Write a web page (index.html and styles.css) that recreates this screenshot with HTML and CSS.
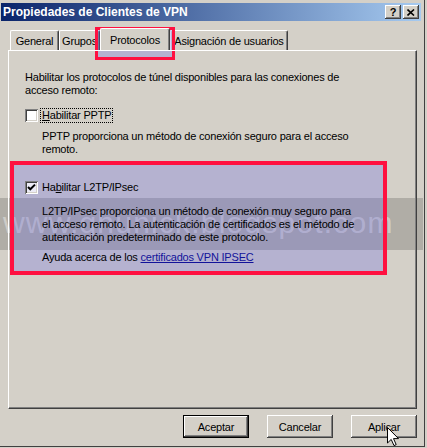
FILE: index.html
```html
<!doctype html>
<html lang="es">
<head>
    <meta charset="utf-8" />
    <title>Propiedades de Clientes de VPN</title>
    <link rel="stylesheet" href="styles.css">
</head>
<body>
    <div class="window">
        <div class="titlebar">
            <span class="title">Propiedades de Clientes de VPN</span>
            <div class="caption-btns">
                <span class="cbtn help">?</span>
                <span class="cbtn">
                    <svg width="8" height="7" viewBox="0 0 8 7"><path d="M0.5 0.5 L7 6.5 M7 0.5 L0.5 6.5" stroke="#000" stroke-width="1.6" fill="none"/></svg>
                </span>
            </div>
        </div>

        <div class="tabs">
            <div class="tab t-general">General</div>
            <div class="tab t-grupos">Grupos</div>
            <div class="tab t-proto active">Protocolos</div>
            <div class="tab t-asig">Asignación de usuarios</div>
        </div>

        <div class="watermark">www.ghunick.blogspot.com</div>

        <div class="panel">
            <p class="intro">Habilitar los protocolos de túnel disponibles para las conexiones de<br>acceso remoto:</p>

            <div class="check">
                <span class="box"></span>
                <span class="focus"><u>H</u>abilitar PPTP</span>
            </div>
            <p class="desc pptp">PPTP proporciona un método de conexión seguro para el acceso<br>remoto.</p>

            <div class="highlight">
                <div class="check">
                    <span class="box checked">
                        <svg width="9" height="9" viewBox="0 0 9 9"><path d="M1 4 L3.3 6.3 L8 1.6" stroke="#000" stroke-width="2" fill="none"/></svg>
                    </span>
                    <span>Ha<u>b</u>ilitar L2TP/IPsec</span>
                </div>
                <p class="desc l2tp">L2TP/IPsec proporciona un método de conexión muy seguro para<br>el acceso remoto. La autenticación de certificados es el método de<br>autenticación predeterminado de este protocolo.</p>
                <p class="desc help-line">Ayuda acerca de los <a href="#">certificados VPN IPSEC</a></p>
            </div>
        </div>

        <div class="buttons">
            <span class="btn default">Aceptar</span>
            <span class="btn">Cancelar</span>
            <span class="btn">Aplicar</span>
        </div>

        <div class="tab-mark"></div>
        <svg class="cursor" width="12" height="20" viewBox="0 0 12 20">
            <path d="M0.5 0.5 L0.5 16 L4.2 12.4 L7 18.6 L9.2 17.6 L6.5 11.6 L11.5 11.6 Z" fill="#fff" stroke="#000" stroke-width="1"/>
        </svg>
    </div>
</body>
</html>
```

FILE: styles.css
```css
* { box-sizing: border-box; }
body { margin: 0; width: 427px; height: 448px; overflow: hidden; background: #d4d0c8; font-family: "Liberation Sans", Arial, sans-serif; font-size: 11px; letter-spacing: -0.2px; color: #000; }
p { margin: 0; }

.window { position: relative; width: 425px; height: 447px; padding: 3px 3px 0 1px; background: #d4d0c8; border-right: 1px solid #404040; border-bottom: 1px solid #404040; }

.titlebar { height: 18px; display: flex; align-items: center; justify-content: space-between; padding: 0 2px 0 2px; background: linear-gradient(to right, #0a246a, #a6caf0); }
.title { color: #fff; font-weight: bold; font-size: 12px; letter-spacing: 0; }
.caption-btns { display: flex; gap: 2px; }
.cbtn { width: 16px; height: 14px; display: flex; align-items: center; justify-content: center; background: #d4d0c8; font-weight: bold; font-size: 11px;
    box-shadow: inset -1px -1px #404040, inset 1px 1px #fff, inset -2px -2px #808080; }

.tabs { display: flex; align-items: flex-end; height: 22px; margin-top: 7px; padding-left: 9px; }
.tab { height: 20px; display: flex; align-items: center; justify-content: center; background: #d4d0c8; border-top: 1px solid #fff; border-left: 1px solid #fff; border-right: 1px solid #404040; border-radius: 2px 2px 0 0; box-shadow: inset -1px 0 #808080; }
.tab.active { position: relative; z-index: 1; height: 23px; margin-bottom: -1px; }
.t-general { width: 49px; }
.t-grupos { width: 41px; }
.t-proto { width: 70px; }
.t-asig { width: 118px; }

.panel { position: relative; z-index: 1; width: 409px; height: 359px; margin-left: 7px; padding: 20px 0 0 16px; border-top: 1px solid #fff; border-left: 1px solid #fff; border-right: 1px solid #404040; border-bottom: 1px solid #404040; box-shadow: inset -1px -1px #808080; }
.intro { line-height: 13px; }

.check { display: flex; align-items: center; gap: 4px; height: 13px; margin-top: 12px; line-height: 13px; }
.box { width: 13px; height: 13px; flex: none; display: flex; align-items: center; justify-content: center; background: #fff;
    box-shadow: inset 1px 1px #808080, inset -1px -1px #fff, inset 2px 2px #404040, inset -2px -2px #d4d0c8; }
.box.checked { background: #ecebf6; }
.focus { outline: 1px dotted #000; outline-offset: 0; padding: 0 1px; margin-left: -1px; }

.desc { margin-left: 17px; line-height: 13px; }
.desc.pptp { margin-top: 8px; }

.highlight { width: 377px; margin: 5px 0 0 -15px; padding: 16px 0 7px 11px; border: 4px solid #ff1040; background: rgba(100, 100, 230, 0.28); }
.highlight .check { margin-top: 0; }
.desc.l2tp { margin-top: 11px; }
.desc.help-line { margin-top: 7px; }
.desc a { color: #12129a; }

.buttons { display: flex; justify-content: flex-end; gap: 18px; margin: 6px 4px 0 0; }
.btn { width: 66px; height: 23px; display: flex; align-items: center; justify-content: center; background: #d4d0c8;
    box-shadow: inset -1px -1px #404040, inset 1px 1px #fff, inset -2px -2px #808080; }
.btn.default { border: 1px solid #000; }

.tab-mark { position: absolute; left: 95px; top: 27px; width: 80px; height: 33px; border: 3px solid #ff1040; background: rgba(100, 100, 230, 0.28); }
.watermark { position: absolute; z-index: 0; left: -1px; top: 198px; width: 424px; height: 52px; padding-left: 4px; background: rgba(0, 0, 0, 0.17); color: rgba(255, 255, 255, 0.4); font-size: 30px; line-height: 50px; letter-spacing: 1.2px; white-space: nowrap; overflow: hidden; }
.cursor { position: absolute; z-index: 2; left: 387px; top: 427px; }
```
